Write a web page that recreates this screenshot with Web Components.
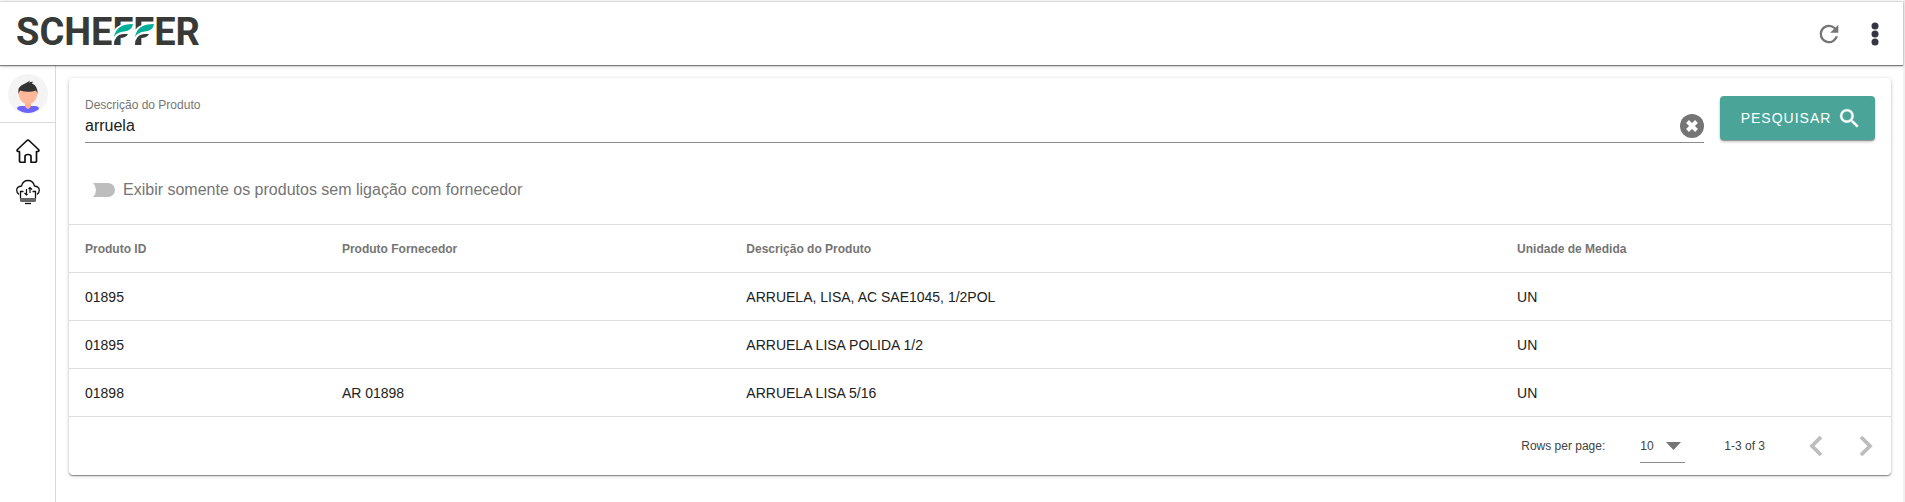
<!DOCTYPE html>
<html lang="pt-BR">
<head>
<meta charset="utf-8">
<meta name="viewport" content="width=device-width, initial-scale=1">
<title>Scheffer - Produtos</title>
<style>
  body { margin: 0; font-family: "Liberation Sans", Arial, sans-serif; color: #212121; background: #fff; }
</style>
</head>
<body>
<app-shell>
  <app-header slot="header"></app-header>
  <app-sidebar slot="sidebar"></app-sidebar>
  <product-card>
    <product-search slot="search" value="arruela"></product-search>
    <toggle-option slot="filter">Exibir somente os produtos sem ligação com fornecedor</toggle-option>
    <product-table></product-table>
    <table-pager slot="footer"></table-pager>
  </product-card>
</app-shell>

<script>
const define = (name, html, setup) => {
  const template = document.createElement('template');
  template.innerHTML = '<style>*, *::before { box-sizing: border-box; } svg { display: block; }</style>' + html;
  customElements.define(name, class extends HTMLElement {
    constructor() {
      super();
      this.attachShadow({ mode: 'open' }).append(template.content.cloneNode(true));
    }
    connectedCallback() { if (setup) setup(this, this.shadowRoot); }
  });
};

define('app-shell', `
  <style>
    :host { display: flex; flex-direction: column; min-height: 100vh; box-sizing: border-box; padding-top: 1px; border-right: 2px solid #f0f0f0; }
    .body { flex: 1; display: flex; }
    main { flex: 1; min-width: 0; padding: 13px 12px 24px 13px; }
  </style>
  <slot name="header"></slot>
  <div class="body"><slot name="sidebar"></slot><main><slot></slot></main></div>`);

define('brand-logo', `
  <style>
    :host { display: block; position: relative; }
    a { display: block; font: 700 38px/38px Roboto, "Liberation Sans", sans-serif; color: #373a36; text-decoration: none; }
    svg { position: absolute; left: 94px; top: -2px; pointer-events: none; }
  </style>
  <a href="#">SCHEFFER</a>
  <svg width="48" height="38" viewBox="0 0 48 38" aria-hidden="true">
    <g id="leaf"><path d="M3 33V20Q8 12 24 11V24H10V33Z" fill="#fff"/><path d="M4 26Q6 13 23 13Q22 20 14 20.500Q7 21 4 26Z" fill="#00b09b"/><path d="M4 34Q4 24 13 23H18Q16 27 10 27V34Z" fill="#373a36"/></g>
    <use href="#leaf" x="21"/>
  </svg>`);

define('app-header', `
  <style>
    :host { display: block; position: relative; }
    header { display: flex; align-items: center; height: 64px; padding: 0 13px 0 16px; border-top: 1px solid #d9d9d9; background: #fff; box-shadow: 0 1px 1px rgba(0,0,0,.45), 0 1px 4px rgba(0,0,0,.2); }
    brand-logo { margin-bottom: 4px; }
    .actions { display: flex; gap: 16px; margin-left: auto; }
    button { display: grid; place-items: center; width: 30px; height: 32px; padding: 0; border: 0; background: none; }
  </style>
  <header>
    <brand-logo></brand-logo>
    <div class="actions">
      <button type="button" aria-label="Atualizar"><svg width="28" height="28" viewBox="0 0 24 24" fill="#757575"><path d="M17.65 6.35A7.96 7.96 0 0 0 12 4a8 8 0 1 0 7.73 10h-2.08A6 6 0 1 1 12 6c1.66 0 3.14.69 4.22 1.78L13 11h7V4z"/></svg></button>
      <button type="button" aria-label="Mais opções"><svg width="8" height="24" viewBox="0 0 8 24" fill="#343741"><circle cx="4" cy="4" r="3.5"/><circle cx="4" cy="12" r="3.5"/><circle cx="4" cy="20" r="3.5"/></svg></button>
    </div>
  </header>`);

define('app-sidebar', `
  <style>
    :host { display: block; width: 56px; box-sizing: border-box; border-right: 1px solid #d9d9d9; }
    .user { display: grid; place-items: center; height: 58px; border-bottom: 1px solid #d9d9d9; }
    nav { display: flex; flex-direction: column; align-items: center; gap: 16px; padding-top: 16px; }
    a { display: block; }
  </style>
  <a class="user" href="#" aria-label="Perfil"><svg width="40" height="40" viewBox="0 0 40 40">
    <circle cx="20" cy="20" r="20" fill="#f4f4f4"/>
    <path d="M9 35Q9 32 13 32H27Q31 32 31 35Q26 39 20 39Q14 39 9 35Z" fill="#6c63ff"/>
    <path d="M17 27H23V32Q22 35 20 35Q18 35 17 32Z" fill="#fbb18f"/>
    <path d="M10.500 16H29.500Q30 27 22.500 30H17.500Q10 27 10.500 16Z" fill="#ffb899"/>
    <path d="M10.300 20Q9.500 12 16 10Q19 8.500 22 6.500L21 8.500L25 7.500L24 9.500Q30 12 29.600 20Q29 18 28 16.500Q21 19 12 16.500Q11 18 10.300 20Z" fill="#333"/>
  </svg></a>
  <nav>
    <a href="#" aria-label="Início"><svg width="24" height="24" viewBox="0 0 24 24" fill="none" stroke="#111" stroke-width="1.7" stroke-linejoin="round"><path d="M4 12.5H2Q.5 12 1.5 10.5L11 1.5Q12 .7 13 1.5L22.5 10.5Q23.5 12 22 12.5H20.5V22Q20.5 23.3 19 23.3H15V17.500Q15 15.500 12 15.500Q9 15.500 9 17.500V23.300H5Q3.500 23.300 3.500 22V12.500"/></svg></a>
    <a href="#" aria-label="Sincronizar"><svg width="24" height="26" viewBox="0 0 24 26" fill="none" stroke="#111" stroke-width="1.300"><path d="M3 15.500Q.7 14 .7 11Q1 7.500 5.500 7Q7 1.500 12 1.500Q17 1.500 18.500 7Q23 7.500 23.300 11Q23.300 14 21 15.500"/><path d="M7.500 12.500H4.500V20M19.500 20V12.500H16.500"/><path d="M4 19H20V22Q20 23 18.500 23H5.500Q4 23 4 22Z" fill="#666" stroke="none"/><path d="M9 24.500H15"/><path d="M10.500 10V16M8.500 14L10.500 16L11.500 15M14 14V8.500M12.500 10L14 8.500L16 10.500" stroke-width="1.200"/></svg></a>
  </nav>`);

define('product-card', `
  <style>
    :host { display: block; border-radius: 4px; background: #fff; box-shadow: 0 1px 1px rgba(0,0,0,.4), 0 1px 4px rgba(0,0,0,.2); }
  </style>
  <slot name="search"></slot><slot name="filter"></slot><slot></slot><slot name="footer"></slot>`);

define('product-search', `
  <style>
    :host { display: block; }
    form { display: flex; align-items: flex-start; gap: 16px; padding: 18px 16px 0; }
    .field { flex: 1; display: grid; grid-template-columns: 1fr 24px; border-bottom: 1px solid #8c8c8c; }
    label { grid-column: 1; font-size: 12px; line-height: 18px; color: #757575; }
    input { grid-column: 1; min-width: 0; height: 28px; padding: 0 0 5px; border: 0; outline: 0; font: 16px "Liberation Sans", Arial, sans-serif; color: #212121; background: none; }
    .clear { grid-column: 2; grid-row: 1 / 3; align-self: end; width: 24px; height: 24px; margin-bottom: 4px; padding: 0; border: 0; background: none; }
    .go { display: flex; align-items: center; justify-content: center; gap: 6px; width: 155px; height: 44px; padding: 0 0 0 8px; border: 0; border-radius: 4px; background: #4aa598; color: #fff; font: 14px "Liberation Sans", Arial, sans-serif; letter-spacing: 1px; box-shadow: 0 1px 1px rgba(0,0,0,.3), 0 2px 3px rgba(0,0,0,.2); }
  </style>
  <form>
    <div class="field">
      <label for="q">Descrição do Produto</label>
      <input id="q" type="text">
      <button class="clear" type="button" aria-label="Limpar"><svg width="24" height="24" viewBox="0 0 24 24"><circle cx="12" cy="12" r="12" fill="#757575"/><path d="M7.500 7.500L16.500 16.500M16.500 7.500L7.500 16.500" stroke="#fff" stroke-width="4"/></svg></button>
    </div>
    <button class="go" type="button">PESQUISAR <svg width="25" height="25" viewBox="0 0 24 24" fill="#fff" stroke="#fff" stroke-width=".4"><path d="M15.500 14h-.79l-.28-.27A6.471 6.471 0 0 0 16 9.500 6.500 6.500 0 1 0 9.500 16c1.610 0 3.090-.59 4.230-1.570l.27.28v.79l5 4.990L20.490 19l-4.990-5zm-6 0C7.010 14 5 11.990 5 9.500S7.010 5 9.500 5 14 7.010 14 9.500 11.990 14 9.500 14z"/></svg></button>
  </form>`,
  (host, root) => {
    const input = root.querySelector('input');
    input.value = host.getAttribute('value') || '';
    root.querySelector('.clear').onclick = () => { input.value = ''; };
  });

define('toggle-option', `
  <style>
    :host { display: flex; align-items: center; box-sizing: border-box; height: 81px; padding: 13px 14px 0; }
    label { display: flex; align-items: center; gap: 8px; font-size: 16px; line-height: 24px; color: #757575; }
    input { appearance: none; position: relative; width: 32px; height: 14px; margin: 0; border-radius: 7px; background: #bdbdbd; }
    input::before { content: ""; position: absolute; left: -7px; top: -3px; width: 20px; height: 20px; border-radius: 50%; background: #fff; }
    input:checked { background: #4aa598; }
    input:checked::before { left: 19px; }
  </style>
  <label><input type="checkbox" role="switch"><slot></slot></label>`);

define('product-table', `
  <style>
    :host { display: block; }
    table { width: 100%; table-layout: fixed; border-collapse: separate; border-spacing: 0; border-bottom: 1px solid #ddd; }
    .id { width: 14.1%; } .supplier { width: 22.2%; } .unit { width: 21.4%; }
    th, td { height: 48px; padding: 0 16px; border-top: 1px solid #ddd; text-align: left; }
    th { font-size: 12px; font-weight: 700; color: #757575; }
    td { font-size: 14px; color: #212121; }
  </style>
  <table>
    <colgroup><col class="id"><col class="supplier"><col><col class="unit"></colgroup>
    <thead><tr><th>Produto ID</th><th>Produto Fornecedor</th><th>Descrição do Produto</th><th>Unidade de Medida</th></tr></thead>
    <tbody></tbody>
  </table>`,
  (host, root) => {
    const rows = [
      ['01895', '', 'ARRUELA, LISA, AC SAE1045, 1/2POL', 'UN'],
      ['01895', '', 'ARRUELA LISA POLIDA 1/2', 'UN'],
      ['01898', 'AR 01898', 'ARRUELA LISA 5/16', 'UN'],
    ];
    const body = root.querySelector('tbody');
    body.replaceChildren();
    for (const row of rows) {
      const tr = body.insertRow();
      for (const text of row) tr.insertCell().textContent = text;
    }
  });

define('table-pager', `
  <style>
    :host { display: flex; align-items: center; justify-content: flex-end; box-sizing: border-box; height: 58px; padding-right: 9px; font-size: 12px; color: #424242; }
    .size { display: grid; align-items: center; margin: 0 39px 0 35px; }
    select, .size svg { grid-area: 1 / 1; }
    select { appearance: none; width: 45px; height: 34px; padding: 0; border: 0; border-bottom: 1px solid #8c8c8c; border-radius: 0; background: none; font: 12px "Liberation Sans", Arial, sans-serif; color: #424242; }
    .size svg { justify-self: end; margin-right: 4px; pointer-events: none; }
    nav { display: flex; gap: 18px; margin-left: 35px; }
    button { display: grid; place-items: center; width: 32px; height: 32px; padding: 0; border: 0; background: none; }
  </style>
  <label for="rows">Rows per page:</label>
  <div class="size">
    <select id="rows"><option>10</option><option>25</option><option>50</option></select>
    <svg width="15" height="8" viewBox="0 0 15 8"><path d="M0 0H15L7.500 8Z" fill="#757575"/></svg>
  </div>
  <span>1-3 of 3</span>
  <nav aria-label="Páginas">
    <button type="button" aria-label="Anterior" disabled><svg width="14" height="22" viewBox="0 0 14 22" fill="none" stroke="#bdbdbd" stroke-width="3.800"><path d="M12 2L3 11L12 20"/></svg></button>
    <button type="button" aria-label="Próxima" disabled><svg width="14" height="22" viewBox="0 0 14 22" fill="none" stroke="#bdbdbd" stroke-width="3.800"><path d="M2 2L11 11L2 20"/></svg></button>
  </nav>`);
</script>
</body>
</html>
